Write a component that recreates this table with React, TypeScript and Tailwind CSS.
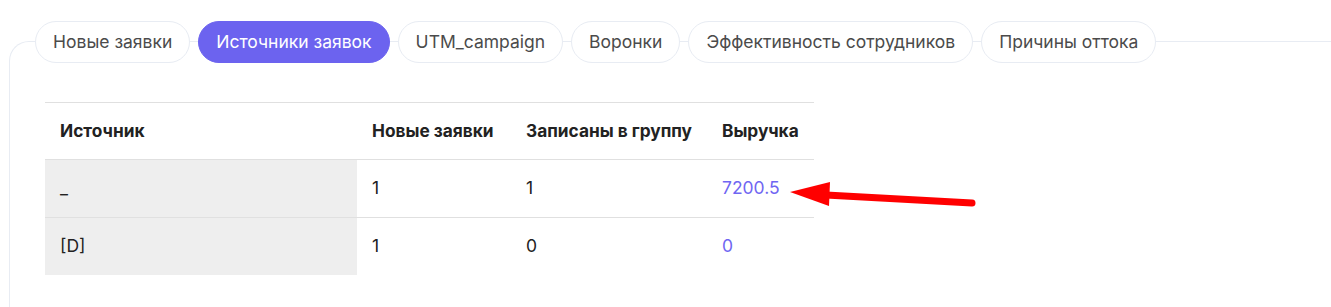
import React from "react";

const tabs = [
  "Новые заявки",
  "Источники заявок",
  "UTM_campaign",
  "Воронки",
  "Эффективность сотрудников",
  "Причины оттока",
];

const rows = [
  { src: "_", n: "1", g: "1", r: "7200.5" },
  { src: "[D]", n: "1", g: "0", r: "0" },
];

export default function App() {
  return (
    <div
      className="relative w-[1331px] h-[307px] bg-white overflow-hidden pt-[41px] pl-[9px]"
      style={{ fontFamily: "Inter, 'Noto Sans', sans-serif" }}
    >
      <div className="h-[300px] border-l border-t border-[#e8ecf3] rounded-tl-[20px]">
        <div className="flex gap-[8px] -mt-[21px] ml-[25px]">
          {tabs.map((t, i) => (
            <div
              key={t}
              className={
                "h-[42px] flex items-center px-[17px] rounded-full text-[17.5px] whitespace-nowrap border " +
                (i === 1
                  ? "bg-[#6c63ef] border-[#6c63ef] text-white"
                  : "bg-white border-[#e8ecf3] text-[#4b4b4b]")
              }
            >
              {t}
            </div>
          ))}
        </div>
        <div className="ml-[35px] mt-[39px] w-[769px] border-t border-[#e0e0e0] text-[17.5px] text-[#222]">
          <div className="grid grid-cols-[312px_154px_196px_107px] h-[57px] items-center font-bold text-[17.3px] border-b border-[#e0e0e0]">
            <div className="pl-[15px]">Источник</div>
            <div className="pl-[15px]">Новые заявки</div>
            <div className="pl-[15px]">Записаны в группу</div>
            <div className="pl-[15px]">Выручка</div>
          </div>
          {rows.map((r, i) => (
            <div
              key={i}
              className={
                "grid grid-cols-[312px_154px_196px_107px] " +
                (i === 0 ? "border-b border-[#e0e0e0] h-[58px]" : "h-[57px]")
              }
            >
              <div className="pl-[15px] bg-[#eeeeee] flex items-center">{r.src}</div>
              <div className="pl-[15px] flex items-center">{r.n}</div>
              <div className="pl-[15px] flex items-center">{r.g}</div>
              <div className="pl-[15px] flex items-center text-[#6f66f2]">{r.r}</div>
            </div>
          ))}
        </div>
      </div>
      <svg
        className="absolute left-0 top-0 pointer-events-none"
        width="1331"
        height="307"
        viewBox="0 0 1331 307"
      >
        <line
          x1="826"
          y1="195"
          x2="972"
          y2="203"
          stroke="#ff0000"
          strokeWidth="7"
          strokeLinecap="round"
        />
        <polygon points="790,192 830,182 829,206" fill="#ff0000" />
      </svg>
    </div>
  );
}
